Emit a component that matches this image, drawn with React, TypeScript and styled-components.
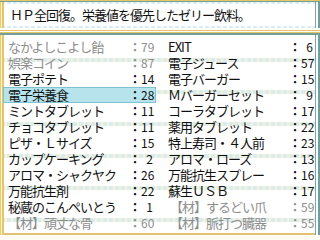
import styled, { createGlobalStyle } from "styled-components";

const GlobalStyle = createGlobalStyle`
  body {
    margin: 0;
    background: #fdfbf2;
    font-family: "Noto Sans CJK JP", "DejaVu Sans", sans-serif;
  }
`;

type Item = { name: string; count: number; dim?: boolean; active?: boolean };

const leftItems: Item[] = [
  { name: "なかよしこよし飴", count: 79, dim: true },
  { name: "娯楽コイン", count: 87, dim: true },
  { name: "電子ポテト", count: 14 },
  { name: "電子栄養食", count: 28, active: true },
  { name: "ミントタブレット", count: 11 },
  { name: "チョコタブレット", count: 11 },
  { name: "ピザ・Ｌサイズ", count: 15 },
  { name: "カップケーキング", count: 2 },
  { name: "アロマ・シャクヤク", count: 26 },
  { name: "万能抗生剤", count: 22 },
  { name: "秘蔵のこんぺいとう", count: 1 },
  { name: "【材】頑丈な骨", count: 60, dim: true },
];

const rightItems: Item[] = [
  { name: "EXIT", count: 6 },
  { name: "電子ジュース", count: 57 },
  { name: "電子バーガー", count: 15 },
  { name: "Ｍバーガーセット", count: 9 },
  { name: "コーラタブレット", count: 17 },
  { name: "薬用タブレット", count: 22 },
  { name: "特上寿司・４人前", count: 23 },
  { name: "アロマ・ローズ", count: 13 },
  { name: "万能抗生スプレー", count: 16 },
  { name: "蘇生ＵＳＢ", count: 17 },
  { name: " 【材】するどい爪", count: 59, dim: true },
  { name: " 【材】脈打つ臓器", count: 55, dim: true },
];

const lace = `
  radial-gradient(circle at 3px 3px, #d6ecf6 2px, transparent 2.5px),
  linear-gradient(to bottom, transparent 0 1px, #fbf3cc 1px 5px, transparent 5px)
`;

const Window = styled.div`
  width: 320px;
  height: 235px;
  display: flex;
  flex-direction: column;
  background: #fff;
  box-shadow: inset 1px 0 0 #eccb68, inset 2px 0 0 #fff6d6,
    inset 4px 0 0 #e6c46a, inset -2px 0 0 #6f9e9e, inset -4px 0 0 #ffffff,
    inset -5px 0 0 #7aa8a8, inset 0 -2px 0 #e2c270;
`;

const Header = styled.div`
  height: 28px;
  display: flex;
  align-items: center;
  padding-left: 10px;
  font-size: 13px;
  letter-spacing: -1px;
  color: #111;
  background: radial-gradient(circle at 3px 0px, #d6ecf6 2px, transparent 2.5px) 0 2px / 6px 3px repeat-x,
    radial-gradient(circle at 3px 3px, #d6ecf6 2px, transparent 2.5px) 0 25px / 6px 3px repeat-x,
    #fff;
  box-shadow: inset 0 1px 0 #e8c860, inset 0 2px 0 #6f9e9e,
    inset 1px 0 0 #eccb68, inset 2px 0 0 #fff6d6, inset 4px 0 0 #e6c46a,
    inset -2px 0 0 #6f9e9e, inset -4px 0 0 #ffffff, inset -5px 0 0 #7aa8a8;
`;

const Divider = styled.div`
  height: 7px;
  box-sizing: border-box;
  border-top: 2px solid #fff;
  background: linear-gradient(
    to bottom,
    #e6c660 0 1px,
    #ffffff 1px 2px,
    #e6c660 2px 3px,
    #6f9e9e 3px 5px
  );
`;

const List = styled.div`
  flex: 1;
  display: grid;
  grid-template-columns: 145px 145px;
  grid-template-rows: repeat(12, 16px);
  grid-auto-flow: column;
  column-gap: 15px;
  padding: 4px 0 0 8px;
  background: linear-gradient(#fff, #fff);
  background: ${lace};
  background-size: 6px 32px, 100% 32px;
  background-position: 0 22px, 0 22px;
  background-color: #fff;
  box-shadow: inset 1px 0 0 #eccb68, inset 2px 0 0 #fff6d6,
    inset 4px 0 0 #e6c46a, inset -2px 0 0 #6f9e9e, inset -4px 0 0 #ffffff,
    inset -5px 0 0 #7aa8a8, inset 0 -2px 0 #e2c270;
`;

const Row = styled.div<{ $dim?: boolean; $active?: boolean }>`
  display: grid;
  grid-template-columns: 1fr 12px 12px;
  align-items: center;
  height: 16px;
  margin: 0 -3px 0 -5px;
  padding: 0 3px 0 5px;
  font-size: 13px;
  line-height: 16px;
  color: ${(p) => (p.$dim ? "#8e8e8e" : "#111")};
  background: ${(p) => (p.$active ? "#b6e3ec" : "transparent")};
  box-shadow: ${(p) => (p.$active ? "inset 0 0 0 1px #7fc2d0" : "none")};
`;

const Name = styled.span`
  white-space: pre;
  letter-spacing: -1px;
  overflow: hidden;
`;

const Colon = styled.span`
  font-size: 12px;
  font-weight: bold;
  text-align: center;
`;

const Count = styled.span`
  font-size: 12px;
  text-align: right;
`;

function ItemRow({ item }: { item: Item }) {
  return (
    <Row $dim={item.dim} $active={item.active}>
      <Name>{item.name}</Name>
      <Colon>：</Colon>
      <Count>{item.count}</Count>
    </Row>
  );
}

export default function App() {
  return (
    <>
      <GlobalStyle />
      <Window>
        <Header>ＨＰ全回復。栄養値を優先したゼリー飲料。</Header>
        <Divider />
        <List>
          {leftItems.map((it) => (
            <ItemRow key={it.name} item={it} />
          ))}
          {rightItems.map((it) => (
            <ItemRow key={it.name} item={it} />
          ))}
        </List>
      </Window>
    </>
  );
}
